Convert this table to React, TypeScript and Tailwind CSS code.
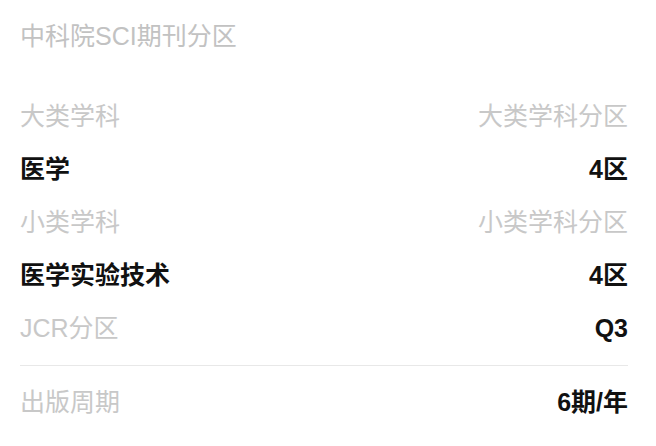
const font = { fontFamily: '"Liberation Sans", "Noto Sans CJK SC", sans-serif' };

type Row = { label: string; value: string; labelMuted?: boolean; valueMuted?: boolean };

const rows: Row[] = [
  { label: '大类学科', value: '大类学科分区', labelMuted: true, valueMuted: true },
  { label: '医学', value: '4区' },
  { label: '小类学科', value: '小类学科分区', labelMuted: true, valueMuted: true },
  { label: '医学实验技术', value: '4区' },
  { label: 'JCR分区', value: 'Q3', labelMuted: true },
];

function InfoRow({ label, value, labelMuted, valueMuted }: Row) {
  return (
    <div className="h-[53px] flex items-center justify-between">
      <span className={labelMuted ? 'text-[#c8c8c8]' : 'text-[#111] font-bold'}>{label}</span>
      <span className={valueMuted ? 'text-[#c8c8c8]' : 'text-[#111] font-bold'}>{value}</span>
    </div>
  );
}

export default function App() {
  return (
    <div className="w-[656px] h-[446px] bg-white pl-5 pr-7 text-[25px] leading-none" style={font}>
      {/* Title */}
      <div className="h-[72px] flex items-center text-[#c2c2c2]">中科院SCI期刊分区</div>

      <div className="mt-[18px]">
        {rows.map((r) => (
          <InfoRow key={r.label} {...r} />
        ))}
      </div>

      <div className="mt-[10px] border-t border-[#e8e8e8]" />

      <div className="h-[72px] flex items-center justify-between">
        <span className="text-[#c8c8c8]">出版周期</span>
        <span className="text-[#111] font-bold">6期/年</span>
      </div>
    </div>
  );
}
